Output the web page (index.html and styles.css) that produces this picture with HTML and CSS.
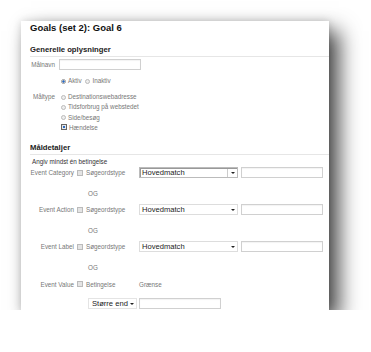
FILE: index.html
```html
<!DOCTYPE html>
<html>
   <head>
      <meta name="viewport" content="width=device-width, initial-scale=1.0"/>
      <link rel="stylesheet" href="styles.css">
   </head>
   <body>
      <div class="panel">
         <h1 class="title">Goals (set 2): Goal 6</h1>
         <!--general info-->
         <h2 class="section">Generelle oplysninger</h2>
         <div class="field name-row">
            <span class="label">Målnavn</span>
            <span class="textbox name-box"></span>
         </div>
         <div class="field status-row">
            <span class="label"></span>
            <span class="opts"><span class="radio on"></span>Aktiv <span class="radio"></span>Inaktiv</span>
         </div>
         <div class="field type-row">
            <span class="label">Måltype</span>
            <ul class="radio-list">
               <li><span class="radio"></span>Destinationswebadresse</li>
               <li><span class="radio"></span>Tidsforbrug på webstedet</li>
               <li><span class="radio"></span>Side/besøg</li>
               <li><span class="radio square on"></span>Hændelse</li>
            </ul>
         </div>
         <!--goal details-->
         <h2 class="section details">Måldetaljer</h2>
         <p class="hint">Angiv mindst én betingelse</p>
         <div class="event-row">
            <span class="ev-label">Event Category</span>
            <span class="check"></span>
            <span class="ev-type">Søgeordstype</span>
            <span class="select focus">Hovedmatch<span class="arrow"></span></span>
            <span class="textbox ev-box"></span>
         </div>
         <div class="og">OG</div>
         <div class="event-row">
            <span class="ev-label">Event Action</span>
            <span class="check"></span>
            <span class="ev-type">Søgeordstype</span>
            <span class="select">Hovedmatch<span class="arrow"></span></span>
            <span class="textbox ev-box"></span>
         </div>
         <div class="og">OG</div>
         <div class="event-row">
            <span class="ev-label">Event Label</span>
            <span class="check"></span>
            <span class="ev-type">Søgeordstype</span>
            <span class="select">Hovedmatch<span class="arrow"></span></span>
            <span class="textbox ev-box"></span>
         </div>
         <div class="og">OG</div>
         <div class="event-row value-row">
            <span class="ev-label">Event Value</span>
            <span class="check"></span>
            <span class="ev-type">Betingelse</span>
            <span class="limit">Grænse</span>
         </div>
         <div class="compare-row">
            <span class="select small">Større end<span class="arrow"></span></span>
            <span class="textbox limit-box"></span>
         </div>
      </div>
   </body>
</html>
```

FILE: styles.css
```css
body {
margin: 0;
background: #fff;
font-family: "Liberation Sans", Arial, sans-serif;
}
.panel {
margin: 21px 0 0 21px;
width: 308px;
height: 289px;
box-sizing: border-box;
padding: 0 0 0 9px;
background: #fff;
font-size: 6.3px;
color: #777;
box-shadow: 10px 10px 20px rgba(0,0,0,0.72), 0 0 8px rgba(0,0,0,0.15);
}
.title {
margin: 0;
padding-top: 1px;
font-size: 9.5px;
line-height: 12px;
color: #111;
}
.section {
margin: 10px 0 0 0;
font-size: 7.7px;
line-height: 12px;
color: #222;
border-bottom: 1px solid #e6e6e6;
}
.section.details {
margin-top: 8.5px;
}
.field {
display: grid;
grid-template-columns: 25px 1fr;
column-gap: 4px;
}
.label {
text-align: right;
line-height: 10px;
}
.textbox {
display: block;
box-sizing: border-box;
height: 11px;
background: #fff;
border: 1px solid #d0d0d0;
box-shadow: inset 0 1px 1px rgba(0,0,0,0.05);
}
.name-row {
margin-top: 2px;
align-items: center;
}
.name-box {
width: 82px;
}
.status-row {
margin-top: 6px;
line-height: 10px;
}
.opts {
color: #777;
}
.radio {
display: inline-block;
box-sizing: border-box;
width: 5px;
height: 5px;
margin: 0 2px 0 2px;
border: 1px solid #bbb;
border-radius: 50%;
background: #eee;
vertical-align: -0.5px;
}
.radio.on {
background: radial-gradient(circle, #2a6bc4 0, #2a6bc4 45%, #e8e8e8 55%);
border-color: #999;
}
.radio.square {
width: 6px;
height: 6px;
border-radius: 0;
border-color: #666;
background: radial-gradient(circle, #2a6bc4 0, #2a6bc4 35%, #e8e8e8 50%);
}
.type-row {
margin-top: 6px;
}
.radio-list {
list-style-type: none;
margin: 0;
padding: 0;
line-height: 10.3px;
}
.hint {
margin: 2px 0 0 2px;
line-height: 10px;
color: #333;
}
.event-row {
display: flex;
align-items: center;
height: 12px;
margin-top: 4.5px;
}
.hint + .event-row {
margin-top: 0;
}
.ev-label {
width: 44px;
text-align: right;
}
.check {
width: 6px;
height: 6px;
box-sizing: border-box;
margin-left: 3px;
border: 1px solid #bbb;
background: #e4e4e4;
}
.ev-type {
width: 53px;
margin-left: 3px;
}
.select {
position: relative;
display: block;
box-sizing: border-box;
width: 99px;
height: 11px;
padding-left: 2px;
border: 1px solid #ddd;
background: #fff;
color: #222;
font-size: 7.6px;
line-height: 9px;
}
.select.focus {
border-color: #bbb;
box-shadow: inset 1px 1px 0 #999, inset -9px 0 0 #fff, inset -10px 0 0 #ccc;
}
.arrow {
position: absolute;
right: 2px;
top: 4px;
width: 0;
height: 0;
border-left: 2px solid transparent;
border-right: 2px solid transparent;
border-top: 2px solid #222;
}
.ev-box {
width: 82px;
margin-left: 3px;
}
.og {
margin-top: 10.5px;
padding-left: 58px;
line-height: 10px;
}
.value-row {
margin-top: 5px;
}
.compare-row {
display: flex;
align-items: center;
height: 12px;
margin-top: 7px;
padding-left: 58px;
}
.select.small {
width: 49px;
padding-left: 3px;
border-color: #e4e4e4;
}
.limit-box {
width: 82px;
margin-left: 2px;
}
```
